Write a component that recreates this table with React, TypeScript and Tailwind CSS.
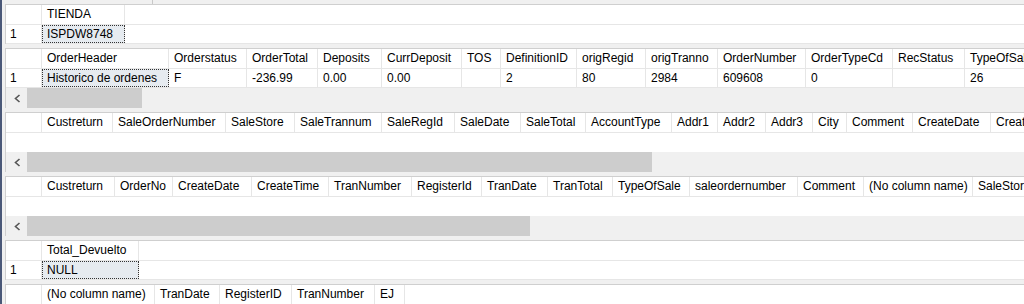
import React from "react";

type Col = { name: string; w: string };

type GridProps = {
  cols: Col[];
  rows?: string[][];
  selected?: number;
  emptyRow?: boolean;
  thumb?: string;
};

function Chevron() {
  return (
    <svg width="7" height="9" viewBox="0 0 7 9">
      <polyline points="5.5,1 1.5,4.5 5.5,8" fill="none" stroke="#555" strokeWidth="1.6" />
    </svg>
  );
}

function Grid({ cols, rows = [], selected, emptyRow = false, thumb }: GridProps) {
  return (
    <div className="shrink-0 bg-white border-t border-l border-[#cfcfcf] overflow-hidden">
      <div className="flex h-[20px] border-b border-[#e6e6e6]">
        <div className="w-[36px] shrink-0 border-r border-[#e6e6e6]" />
        {cols.map((c, i) => (
          <div key={i} className={`${c.w} shrink-0 border-r border-[#e6e6e6] pl-[5px] leading-[19px] whitespace-nowrap overflow-hidden`}>
            {c.name}
          </div>
        ))}
      </div>
      {rows.map((r, ri) => (
        <div key={ri} className="flex h-[19px] border-b border-[#e6e6e6]">
          <div className="w-[36px] shrink-0 border-r border-[#e6e6e6] pl-[4px] leading-[18px]">{ri + 1}</div>
          {r.map((v, i) => (
            <div
              key={i}
              className={`${cols[i].w} shrink-0 border-r border-[#e6e6e6] pl-[5px] leading-[18px] whitespace-nowrap overflow-hidden ${
                selected === i ? "bg-[#e6ebf0] outline-1 outline-dotted outline-[#333] -outline-offset-1" : ""
              }`}
            >
              {v}
            </div>
          ))}
        </div>
      ))}
      {emptyRow && <div className="h-[19px]" />}
      {thumb && (
        <div className="flex h-[20px] bg-[#f0f0f0]">
          <div className="w-[21px] shrink-0 flex items-center justify-center pl-[1px]">
            <Chevron />
          </div>
          <div className={`${thumb} shrink-0 bg-[#cdcdcd]`} />
        </div>
      )}
    </div>
  );
}

const tienda: Col[] = [{ name: "TIENDA", w: "w-[83px]" }];

const orders: Col[] = [
  { name: "OrderHeader", w: "w-[127px]" },
  { name: "Orderstatus", w: "w-[78px]" },
  { name: "OrderTotal", w: "w-[71px]" },
  { name: "Deposits", w: "w-[64px]" },
  { name: "CurrDeposit", w: "w-[80px]" },
  { name: "TOS", w: "w-[39px]" },
  { name: "DefinitionID", w: "w-[76px]" },
  { name: "origRegid", w: "w-[69px]" },
  { name: "origTranno", w: "w-[72px]" },
  { name: "OrderNumber", w: "w-[88px]" },
  { name: "OrderTypeCd", w: "w-[87px]" },
  { name: "RecStatus", w: "w-[72px]" },
  { name: "TypeOfSale", w: "w-[90px]" },
];

const sales: Col[] = [
  { name: "Custreturn", w: "w-[71px]" },
  { name: "SaleOrderNumber", w: "w-[113px]" },
  { name: "SaleStore", w: "w-[69px]" },
  { name: "SaleTrannum", w: "w-[87px]" },
  { name: "SaleRegId", w: "w-[73px]" },
  { name: "SaleDate", w: "w-[66px]" },
  { name: "SaleTotal", w: "w-[65px]" },
  { name: "AccountType", w: "w-[86px]" },
  { name: "Addr1", w: "w-[46px]" },
  { name: "Addr2", w: "w-[48px]" },
  { name: "Addr3", w: "w-[47px]" },
  { name: "City", w: "w-[34px]" },
  { name: "Comment", w: "w-[66px]" },
  { name: "CreateDate", w: "w-[78px]" },
  { name: "CreateTime", w: "w-[100px]" },
];

const returns: Col[] = [
  { name: "Custreturn", w: "w-[73px]" },
  { name: "OrderNo", w: "w-[58px]" },
  { name: "CreateDate", w: "w-[79px]" },
  { name: "CreateTime", w: "w-[77px]" },
  { name: "TranNumber", w: "w-[83px]" },
  { name: "RegisterId", w: "w-[70px]" },
  { name: "TranDate", w: "w-[66px]" },
  { name: "TranTotal", w: "w-[65px]" },
  { name: "TypeOfSale", w: "w-[77px]" },
  { name: "saleordernumber", w: "w-[108px]" },
  { name: "Comment", w: "w-[66px]" },
  { name: "(No column name)", w: "w-[109px]" },
  { name: "SaleStore", w: "w-[100px]" },
];

const total: Col[] = [{ name: "Total_Devuelto", w: "w-[97px]" }];

const ej: Col[] = [
  { name: "(No column name)", w: "w-[113px]" },
  { name: "TranDate", w: "w-[65px]" },
  { name: "RegisterID", w: "w-[72px]" },
  { name: "TranNumber", w: "w-[83px]" },
  { name: "EJ", w: "w-[30px]" },
];

export default function App() {
  return (
    <div className="w-[1024px] h-[304px] overflow-hidden flex bg-[#f0f0f0] text-[12px] text-black font-['Liberation_Sans',Arial,sans-serif]">
      <div className="w-[2px] shrink-0 bg-[#4a5878]" />
      <div className="flex-1 min-w-0 flex flex-col gap-[4px] pl-[3px] overflow-hidden">
        <div className="h-[0px] shrink-0 flex">
          <div className="w-[147px] shrink-0" />
          <div className="w-px h-[4px] bg-[#c8c8c8]" />
        </div>
        <Grid cols={tienda} rows={[["ISPDW8748"]]} selected={0} />
        <Grid
          cols={orders}
          rows={[["Historico de ordenes", "F", "-236.99", "0.00", "0.00", "", "2", "80", "2984", "609608", "0", "", "26"]]}
          selected={0}
          thumb="w-[115px]"
        />
        <Grid cols={sales} emptyRow thumb="w-[625px]" />
        <Grid cols={returns} emptyRow thumb="w-[503px]" />
        <Grid cols={total} rows={[["NULL"]]} selected={0} />
        <Grid cols={ej} />
      </div>
    </div>
  );
}
